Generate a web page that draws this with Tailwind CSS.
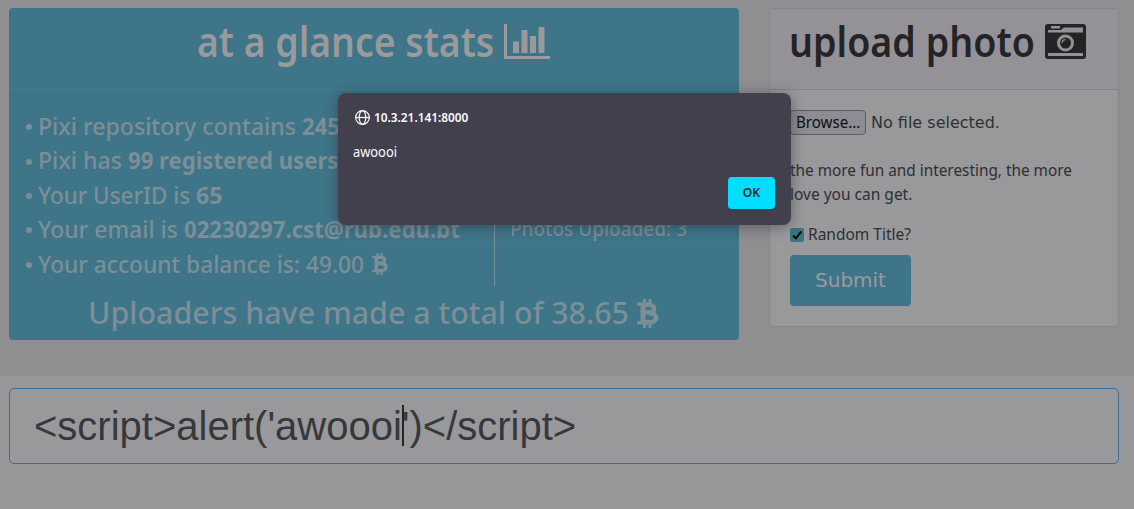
<!DOCTYPE html>
<html lang="en">
<head>
<meta charset="utf-8">
<title>Pixi</title>
<script src="https://cdn.jsdelivr.net/npm/@tailwindcss/browser@4"></script>
</head>
<body class="w-[1134px] h-[509px] overflow-hidden bg-[#979799] font-['Noto_Sans','Open_Sans',sans-serif]">
<svg class="hidden">
  <symbol id="coin" viewBox="0 0 22 29">
    <path fill="none" stroke="currentColor" stroke-width="3" d="M7.500 0V5M13 0V5M7.500 24V29M13 24V29"/>
    <path fill="none" stroke="currentColor" stroke-width="3.200" d="M0 5.200H11M0 23.800H11"/>
    <path fill="none" stroke="currentColor" stroke-width="5" d="M6 4V25"/>
    <path fill="none" stroke="currentColor" stroke-width="4.400" d="M6 5.800H12.500C18.800 5.800 18.800 13.500 12.500 13.500H6M12 14.200C21.500 14.200 21.500 23.200 13 23.200H6"/>
  </symbol>
</svg>

<main class="flex h-[376px] items-start gap-[30px] bg-[#8f8f91] pl-[9px] pt-2">
  <section class="h-[332px] w-[730px] rounded-[4px] bg-[#3f7589] text-[#7c8f97]">
    <header class="flex h-[82px] border-b border-[#4b7c8b] pl-[188px] pt-[9px] text-[#9a999b]">
      <h1 class="flex text-[41px] font-semibold leading-[48px]"><span class="inline-block w-[299px] shrink-0 origin-left scale-x-[0.911] whitespace-nowrap">at a glance stats</span>
        <svg class="ml-[8px] mt-[7px]" width="46" height="36" viewBox="0 0 46 36" fill="currentColor"><path d="M0 0H3V32H46V35H0ZM9 17.5H15V29H9ZM17.500 6H23.500V29H17.500ZM26 12H32V29H26ZM34.500 3H40.500V29H34.500Z"/></svg>
      </h1>
    </header>
    <div class="flex pt-[19px]">
      <ul class="w-[485px] pl-[17px] text-[23.5px] font-medium leading-[34.4px]">
        <li class="flex items-center"><i class="mr-[6px] mt-[2px] size-[6px] rounded-full bg-current"></i><span class="inline-block w-[264px] shrink-0 origin-left scale-x-[0.981] whitespace-nowrap">Pixi repository contains</span><b class="inline-block w-[126px] shrink-0 origin-left scale-x-[0.94] whitespace-nowrap font-bold">245 pictures</b></li>
        <li class="flex items-center"><i class="mr-[6px] mt-[2px] size-[6px] rounded-full bg-current"></i><span class="inline-block w-[90px] shrink-0 origin-left scale-x-[0.982] whitespace-nowrap">Pixi has</span><b class="inline-block w-[210px] shrink-0 origin-left scale-x-[0.942] whitespace-nowrap font-bold">99 registered users</b></li>
        <li class="flex items-center"><i class="mr-[6px] mt-[2px] size-[6px] rounded-full bg-current"></i><span class="inline-block w-[158px] shrink-0 origin-left scale-x-[0.955] whitespace-nowrap">Your UserID is</span><b class="inline-block w-[27px] shrink-0 origin-left scale-x-[0.985] whitespace-nowrap font-bold">65</b></li>
        <li class="flex items-center"><i class="mr-[6px] mt-[2px] size-[6px] rounded-full bg-current"></i><span class="inline-block w-[146px] shrink-0 origin-left scale-x-[0.975] whitespace-nowrap">Your email is</span><b class="inline-block w-[277px] shrink-0 origin-left scale-x-[0.943] whitespace-nowrap font-bold">02230297.cst@rub.edu.bt</b></li>
        <li class="flex items-center"><i class="mr-[6px] mt-[2px] size-[6px] rounded-full bg-current"></i><span class="inline-block w-[326px] shrink-0 origin-left scale-x-[0.967] whitespace-nowrap">Your account balance is: 49.00</span><svg class="ml-[7.5px] mt-px" width="16" height="22" viewBox="0 0 22 29" preserveAspectRatio="none"><use href="#coin" width="22" height="29"/></svg></li>
      </ul>
      <div class="h-[177px] border-l border-[#7c8f97] pl-[15px] pt-[106px] text-[20px] font-medium leading-7"><span class="inline-block w-[178px] shrink-0 origin-left scale-x-[0.95] whitespace-nowrap">Photos Uploaded: 3</span></div>
    </div>
    <h2 class="mt-[4px] flex pl-[79px] text-[31.5px] font-medium leading-[44px]"><span class="inline-block w-[541px] shrink-0 origin-left scale-x-[0.9645] whitespace-nowrap">Uploaders have made a total of 38.65</span><svg class="ml-[8px] mt-[9px]" width="22" height="29"><use href="#coin"/></svg></h2>
  </section>

  <section class="h-[319px] w-[350px] rounded-[4px] border border-[#868689] bg-[#99999b] text-[#2f3033]">
    <header class="flex h-[81px] rounded-t-[3px] border-b border-[#858389] bg-[#949297] pl-[19px] pt-[8px] text-[#242426]">
      <h1 class="flex text-[41px] font-semibold leading-[48px]"><span class="inline-block w-[248px] shrink-0 origin-left scale-x-[0.917] whitespace-nowrap">upload photo</span>
        <svg class="ml-[8px] mt-[7px]" width="41" height="35" viewBox="0 0 41 35"><rect width="41" height="35" rx="3" fill="currentColor"/><path fill="#949297" d="M6 2H15V4.500H6ZM3 6H16L19 3.500H38V8.500H3ZM3 29H38V32H3Z"/><circle cx="20.500" cy="19" r="8.500" fill="#949297"/><circle cx="20.500" cy="19" r="5.500" fill="currentColor"/><path d="M17 19A3.500 3.500 0 0 1 20.500 15.700" fill="none" stroke="#949297" stroke-width="1.300"/></svg>
      </h1>
    </header>
    <div class="flex flex-col items-start pl-[20px] pt-[20px] text-[15.5px] leading-6">
      <div class="flex h-[25px] items-center">
        <span class="flex h-[25px] w-[76px] items-center rounded-[4px] border border-[#5c5b69] bg-[#8d8c92] pb-px pl-[5px] text-[#0f0f12]"><span class="inline-block w-[65px] shrink-0 origin-left scale-x-[0.975] whitespace-nowrap">Browse...</span></span>
        <span class="ml-[5px] font-['DejaVu_Sans',sans-serif] text-[16px]">No file selected.</span>
      </div>
      <p class="mt-[23px]"><span class="inline-block w-[282px] origin-left scale-x-[0.99] whitespace-nowrap">the more fun and interesting, the more</span><br>love you can get.</p>
      <label class="mt-4 flex items-center"><svg class="mr-[4px] mt-[2px]" width="14" height="14"><rect width="14" height="14" rx="2" fill="#3a7581"/><path d="M3 7.500L5.800 10.300L11.300 3.500" fill="none" stroke="#08080a" stroke-width="2"/></svg>Random Title?</label>
      <button class="mt-[9px] h-[51px] w-[121px] rounded-[4px] bg-[#3f7589] pb-[2px] font-['DejaVu_Sans',sans-serif] text-[20px] text-[#9a9b9d]">Submit</button>
    </div>
  </section>
</main>

<div class="pl-[9px] pt-3">
  <div class="flex h-[76px] w-[1110px] items-center rounded-[5px] border border-[#386fa0] bg-[#99999b] pl-[24px] font-['Liberation_Sans',sans-serif] text-[40px] text-[#37383b]"><span>&lt;script&gt;alert('awoooi</span><i class="mr-[-2px] h-[41px] w-[2px] -translate-y-px bg-[#242528]"></i><span>')&lt;/script&gt;</span></div>
</div>

<div role="dialog" class="absolute left-[338px] top-[93px] flex h-[132px] w-[453px] flex-col rounded-[8px] bg-[#42404d] px-[16px] pt-[14px] text-[#fbfbfe] shadow-[0_2px_14px_rgba(30,30,40,0.45)]">
  <div class="flex h-5 items-center text-[12.8px] font-semibold leading-5"><svg class="ml-px mr-[4px] mt-px" width="15" height="15" viewBox="0 0 15 15" fill="none" stroke="currentColor" stroke-width="1.2"><circle cx="7.500" cy="7.500" r="6.800"/><ellipse cx="7.500" cy="7.500" rx="3.300" ry="6.800"/><path d="M.7 7.500H14.300"/></svg><span class="inline-block w-[95px] shrink-0 origin-left scale-x-[0.925] whitespace-nowrap">10.3.21.141:8000</span></div>
  <p class="mt-[15px] text-[13.5px] leading-5"><span class="-ml-px inline-block w-[44px] origin-left scale-x-[0.953] whitespace-nowrap">awoooi</span></p>
  <button class="mt-[15px] flex h-8 w-[47px] items-center justify-center self-end rounded-[4px] bg-[#00ddff] pb-[2px] text-[13px] font-semibold leading-5 text-[#2b2a33]"><span class="inline-block scale-x-[0.93]">OK</span></button>
</div>
</body>
</html>
